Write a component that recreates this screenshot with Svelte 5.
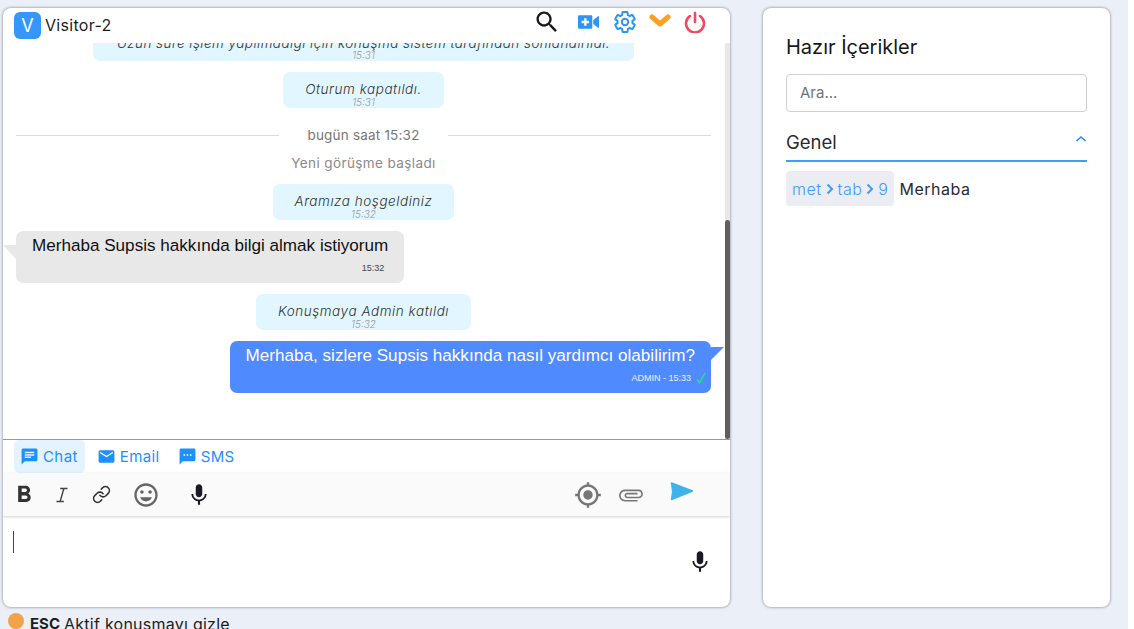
<script lang="ts">
  const tabs = [
    { label: 'Chat', d: 'M20 2H4c-1.1 0-1.99.9-1.99 2L2 22l4-4h14c1.1 0 2-.9 2-2V4c0-1.1-.9-2-2-2zM6 9h12v2H6V9zm8 5H6v-2h8v2zm4-6H6V6h12v2z', active: true },
    { label: 'Email', d: 'M20 4H4c-1.1 0-1.99.9-1.99 2L2 18c0 1.1.9 2 2 2h16c1.1 0 2-.9 2-2V6c0-1.1-.9-2-2-2zm0 4l-8 5-8-5V6l8 5 8-5v2z', active: false },
    { label: 'SMS', d: 'M20 2H4c-1.1 0-1.99.9-1.99 2L2 22l4-4h14c1.1 0 2-.9 2-2V4c0-1.1-.9-2-2-2zM9 11H7V9h2v2zm4 0h-2V9h2v2zm4 0h-2V9h2v2z', active: false }
  ];
  const keys = ['met', 'tab', '9'];
  const mic = 'M12 14c1.66 0 2.99-1.34 2.99-3L15 5c0-1.66-1.34-3-3-3S9 3.34 9 5v6c0 1.66 1.34 3 3 3zm5.3-3c0 3-2.54 5.1-5.3 5.1S6.7 14 6.7 11H5c0 3.41 2.72 6.23 6 6.72V21h2v-3.28c3.28-.48 6-3.3 6-6.72h-1.7z';
</script>

<div class="page">
  <div class="columns">
    <section class="chat card">
      <header class="head">
        <div class="who">
          <span class="avatar">V</span>
          <span class="name">Visitor-2</span>
        </div>
        <div class="actions">
          <svg class="i-search" viewBox="0 0 24 24"><path fill="#1a1a1a" d="M15.5 14h-.79l-.28-.27C15.41 12.59 16 11.11 16 9.5 16 5.91 13.09 3 9.5 3S3 5.91 3 9.5 5.91 16 9.5 16c1.61 0 3.09-.59 4.23-1.57l.27.28v.79l5 4.99L20.49 19l-4.99-5zm-6 0C7.01 14 5 11.99 5 9.5S7.01 5 9.5 5 14 7.01 14 9.5 11.99 14 9.5 14z"/></svg>
          <svg class="i-video" viewBox="0 0 22 14"><path fill="#2f95f5" d="M1 0h13a1 1 0 0 1 1 1v12a1 1 0 0 1-1 1H1a1 1 0 0 1-1-1V1a1 1 0 0 1 1-1zm5.5 3v2.8H3.8v2.4h2.7V11h2.4V8.2h2.7V5.8H8.9V3zM16 5l5-4h1v12h-1l-5-4z" fill-rule="evenodd"/></svg>
          <svg class="i-gear" viewBox="0 0 24 24"><path fill="none" stroke="#2f95f5" stroke-width="2" d="M19.43 12.98c.04-.32.07-.64.07-.98s-.03-.66-.07-.98l2.11-1.65c.19-.15.24-.42.12-.64l-2-3.46c-.12-.22-.39-.3-.61-.22l-2.49 1c-.52-.4-1.08-.73-1.69-.98l-.38-2.65C14.46 2.18 14.25 2 14 2h-4c-.25 0-.46.18-.49.42l-.38 2.65c-.61.25-1.17.59-1.69.98l-2.49-1c-.23-.09-.49 0-.61.22l-2 3.46c-.13.22-.07.49.12.64l2.11 1.65c-.04.32-.07.65-.07.98s.03.66.07.98l-2.11 1.65c-.19.15-.24.42-.12.64l2 3.46c.12.22.39.3.61.22l2.49-1c.52.4 1.08.73 1.69.98l.38 2.65c.03.24.24.42.49.42h4c.25 0 .46-.18.49-.42l.38-2.65c.61-.25 1.17-.59 1.69-.98l2.49 1c.23.09.49 0 .61-.22l2-3.46c.12-.22.07-.49-.12-.64l-2.11-1.65z"/><circle cx="12" cy="12" r="3.2" fill="none" stroke="#2f95f5" stroke-width="2"/></svg>
          <svg class="i-down" viewBox="0 0 22 14"><path fill="none" stroke="#ff9f24" stroke-width="5" stroke-linecap="round" stroke-linejoin="round" d="M3 3l8 7 8-7"/></svg>
          <svg class="i-power" viewBox="0 0 22 22"><path fill="none" stroke="#f4465c" stroke-width="2.6" stroke-linecap="round" d="M6 5a9 9 0 1 0 10 0M11 2v9"/></svg>
        </div>
      </header>

      <div class="body">
        <div class="messages">
          <div class="note wide">
            <em>Uzun süre işlem yapılmadığı için konuşma sistem tarafından sonlandırıldı.</em>
            <time>15:31</time>
          </div>
          <div class="note"><em>Oturum kapatıldı.</em><time>15:31</time></div>
          <div class="day"><span>bugün saat 15:32</span></div>
          <div class="started">Yeni görüşme başladı</div>
          <div class="note"><em>Aramıza hoşgeldiniz</em><time>15:32</time></div>
          <div class="bubble in">
            <p>Merhaba Supsis hakkında bilgi almak istiyorum</p>
            <div class="meta">15:32</div>
          </div>
          <div class="note"><em>Konuşmaya Admin katıldı</em><time>15:32</time></div>
          <div class="bubble out">
            <p>Merhaba, sizlere Supsis hakkında nasıl yardımcı olabilirim?</p>
            <div class="meta">
              ADMIN - 15:33
              <svg class="tick" viewBox="0 0 10 12"><path fill="none" stroke="#1df05a" stroke-width="1.3" d="M1 7l2.5 4L9 1"/></svg>
            </div>
          </div>
        </div>
        <div class="scroll"><div class="thumb"></div></div>
      </div>

      <nav class="tabs">
        {#each tabs as tab}
          <div class="tab" class:active={tab.active}>
            <svg viewBox="0 0 24 24"><path fill="#1e8fff" d={tab.d}/></svg>
            <span>{tab.label}</span>
          </div>
        {/each}
      </nav>

      <div class="toolbar">
        <div class="tools">
          <svg class="t-b" viewBox="0 0 24 24"><path fill="#333" d="M15.6 10.79c.97-.67 1.65-1.77 1.65-2.79 0-2.26-1.75-4-4-4H7v14h7.04c2.09 0 3.71-1.7 3.71-3.79 0-1.52-.86-2.82-2.15-3.42zM10 6.5h3c.83 0 1.5.67 1.5 1.5s-.67 1.5-1.5 1.5h-3v-3zm3.5 9H10v-3h3.5c.83 0 1.5.67 1.5 1.5s-.67 1.5-1.5 1.5z"/></svg>
          <svg class="t-i" viewBox="0 0 24 24"><path fill="#444" d="M10 4v1.6h3l-3.6 12.8H6V20h8v-1.6h-3l3.6-12.8H18V4z"/></svg>
          <svg class="t-l" viewBox="0 0 24 24"><path fill="none" stroke="#333" stroke-width="2" stroke-linecap="round" stroke-linejoin="round" d="M10 13a5 5 0 0 0 7.54.54l3-3a5 5 0 0 0-7.07-7.07l-1.72 1.71M14 11a5 5 0 0 0-7.54-.54l-3 3a5 5 0 0 0 7.07 7.07l1.71-1.71"/></svg>
          <svg class="t-m" viewBox="0 0 24 24"><path fill="#666" d="M11.99 2C6.47 2 2 6.48 2 12s4.47 10 9.99 10C17.52 22 22 17.52 22 12S17.52 2 11.99 2zM12 20c-4.42 0-8-3.58-8-8s3.58-8 8-8 8 3.58 8 8-3.58 8-8 8zm3.5-9c.83 0 1.5-.67 1.5-1.5S16.33 8 15.5 8 14 8.67 14 9.5s.67 1.5 1.5 1.5zm-7 0c.83 0 1.5-.67 1.5-1.5S9.33 8 8.5 8 7 8.67 7 9.5 7.67 11 8.5 11zm3.5 6.5c2.33 0 4.31-1.46 5.11-3.5H6.89c.8 2.04 2.78 3.5 5.11 3.5z"/></svg>
          <svg class="t-v" viewBox="0 0 24 24"><path fill="#1a1a24" d={mic}/></svg>
        </div>
        <div class="tools right">
          <svg class="t-gps" viewBox="0 0 24 24"><path fill="#777" d="M12 8c-2.21 0-4 1.79-4 4s1.79 4 4 4 4-1.79 4-4-1.79-4-4-4zm8.94 3c-.46-4.17-3.77-7.48-7.94-7.94V1h-2v2.06C6.83 3.52 3.52 6.83 3.06 11H1v2h2.06c.46 4.17 3.77 7.48 7.94 7.94V23h2v-2.06c4.17-.46 7.48-3.77 7.94-7.94H23v-2h-2.06zM12 19c-3.87 0-7-3.13-7-7s3.13-7 7-7 7 3.13 7 7-3.13 7-7 7z"/></svg>
          <svg class="t-clip" viewBox="0 0 24 24"><path fill="#777" transform="rotate(90 12 12)" d="M16.5 6v11.5c0 2.21-1.79 4-4 4s-4-1.79-4-4V5c0-1.38 1.12-2.5 2.5-2.5s2.5 1.12 2.5 2.5v10.5c0 .55-.45 1-1 1s-1-.45-1-1V6H10v9.5c0 1.38 1.12 2.5 2.5 2.5s2.5-1.12 2.5-2.5V5c0-2.21-1.79-4-4-4S7 2.79 7 5v12.5c0 3.04 2.46 5.5 5.5 5.5s5.5-2.46 5.5-5.5V6h-1.5z"/></svg>
          <svg class="t-send" viewBox="0 0 24 20"><path fill="#3fb3ea" stroke="#3fb3ea" stroke-width="1.4" stroke-linejoin="round" d="M1.5 1l21 8-21 8.5 1-7h8.5v-1.5H2.5z"/></svg>
        </div>
      </div>

      <div class="compose">
        <span class="caret"></span>
        <svg class="compose-mic" viewBox="0 0 24 24"><path fill="#1a1a24" d={mic}/></svg>
      </div>
    </section>

    <aside class="side card">
      <h2>Hazır İçerikler</h2>
      <div class="search">Ara...</div>
      <div class="group">
        <span>Genel</span>
        <svg viewBox="0 0 12 8"><path fill="none" stroke="#1e8fff" stroke-width="1.6" d="M1.5 6L6 2l4.5 4"/></svg>
      </div>
      <div class="item">
        <span class="keys">
          {#each keys as key, i}
            {#if i > 0}
              <svg viewBox="0 0 8 12"><path fill="none" stroke="#3f9bfb" stroke-width="2" d="M1.5 1.5L6 6l-4.5 4.5"/></svg>
            {/if}
            <span>{key}</span>
          {/each}
        </span>
        <span class="title">Merhaba</span>
      </div>
    </aside>
  </div>

  <footer class="hint">
    <span class="dot"></span>
    <strong>ESC</strong> <span>Aktif konuşmayı gizle</span>
  </footer>
</div>

<style>
  :global(body) {
    background: #fff;
  }

  .page {
    width: 1128px;
    height: 629px;
    overflow: hidden;
    background: #ebeff8;
    padding: 8px 0 0 3px;
    box-sizing: border-box;
    font-family: Inter, sans-serif;
    color: #1d1d24;
  }

  .columns {
    display: flex;
    gap: 33px;
    height: 599px;
  }

  .card {
    background: #fff;
    border-radius: 8px;
    box-shadow: 0 0 3px rgba(0, 0, 0, 0.5);
    box-sizing: border-box;
  }

  .chat {
    width: 727px;
    display: flex;
    flex-direction: column;
    overflow: hidden;
  }

  .head {
    height: 35px;
    flex: none;
    display: flex;
    justify-content: space-between;
    padding: 4px 24px 0 11px;
    box-sizing: border-box;
  }

  .who {
    display: flex;
    align-items: flex-start;
    gap: 4px;
  }

  .avatar {
    width: 27px;
    height: 27px;
    border-radius: 6px;
    background: #3597fb;
    color: #fff;
    font-size: 18px;
    line-height: 27px;
    text-align: center;
  }

  .name {
    font-size: 16px;
    line-height: 27px;
    letter-spacing: 0.3px;
  }

  .actions {
    display: flex;
    align-items: center;
    height: 22px;
    margin-top: -1px;
  }

  .i-search { width: 28px; height: 28px; }
  .i-video { width: 21px; height: 14px; margin-left: 17px; }
  .i-gear { width: 24px; height: 24px; margin-left: 14px; }
  .i-down { width: 22px; height: 14px; margin-left: 12px; margin-top: -2px; }
  .i-power { width: 22px; height: 22px; margin-left: 13px; }

  .body {
    flex: none;
    height: 397px;
    display: flex;
    border-bottom: 1px solid #7b96ee;
    box-sizing: border-box;
  }

  .messages {
    flex: 1;
    min-width: 0;
    overflow: hidden;
    display: flex;
    flex-direction: column;
    justify-content: flex-end;
    align-items: center;
    gap: 11px;
    padding: 0 14px 46px 13px;
    box-sizing: border-box;
  }

  .note {
    flex: none;
    position: relative;
    height: 36px;
    padding: 0 22px;
    border-radius: 7px;
    background: #e2f6ff;
    text-align: center;
    font-size: 13.5px;
    font-weight: 300;
    letter-spacing: 0.55px;
    line-height: 34px;
    color: #333;
    box-sizing: border-box;
  }

  .note em {
    white-space: nowrap;
  }

  .note time {
    position: absolute;
    left: 0;
    right: 0;
    bottom: 0;
    font-size: 10px;
    letter-spacing: 0;
    line-height: 11px;
    font-style: italic;
    color: #9a9a9a;
  }

  .note.wide {
    width: 541px;
    padding: 0;
    line-height: 36px;
    letter-spacing: 0.45px;
  }

  .day {
    flex: none;
    align-self: stretch;
    display: flex;
    align-items: center;
    gap: 28px;
    height: 16px;
    margin-top: 8px;
    font-size: 13.5px;
    letter-spacing: 0.2px;
    color: #777;
  }

  .day::before,
  .day::after {
    content: '';
    flex: 1;
    height: 1px;
    background: #ddd;
  }

  .started {
    flex: none;
    margin: 3px 0;
    height: 13px;
    line-height: 13px;
    font-size: 13.5px;
    letter-spacing: 0.4px;
    color: #8a8a8a;
  }

  .bubble {
    flex: none;
    position: relative;
    height: 52px;
    border-radius: 7px;
    font-family: "Liberation Sans", Arial, sans-serif;
    padding: 6px 16px 0;
    box-sizing: border-box;
  }

  .bubble p {
    margin: 0;
    font-size: 17.1px;
    line-height: 18px;
    white-space: nowrap;
  }

  .bubble .meta {
    display: flex;
    justify-content: flex-end;
    align-items: flex-end;
    gap: 5px;
    font-size: 9px;
    line-height: 12px;
    margin-top: 7px;
  }

  .bubble.in {
    align-self: flex-start;
    background: #e8e8e8;
    color: #111;
  }

  .bubble.in .meta {
    color: #444;
    margin-right: 4px;
  }

  .bubble.in::before {
    content: '';
    position: absolute;
    left: -13px;
    top: 14px;
    border-right: 13px solid #e8e8e8;
    border-bottom: 14px solid transparent;
  }

  .bubble.out {
    align-self: flex-end;
    background: #4f8bff;
    color: #fff;
  }

  .bubble.out .meta {
    color: #e8f0ff;
    margin-right: -11px;
  }

  .tick {
    width: 10px;
    height: 12px;
  }

  .bubble.out::after {
    content: '';
    position: absolute;
    right: -13px;
    top: 6px;
    border-left: 13px solid #4f8bff;
    border-bottom: 13px solid transparent;
  }

  .scroll {
    width: 5px;
    flex: none;
    background: #e8e8e8;
    display: flex;
    flex-direction: column;
    justify-content: flex-end;
  }

  .thumb {
    height: 219px;
    background: #5f5f5f;
    border-radius: 3px;
  }

  .tabs {
    flex: none;
    height: 33px;
    display: flex;
    gap: 6px;
    padding: 0 0 0 11px;
  }

  .tab {
    display: flex;
    align-items: center;
    gap: 4px;
    padding: 0 6px;
    border-radius: 5px;
    color: #1e8fff;
    font-size: 15px;
    letter-spacing: 0.4px;
  }

  .tab svg {
    width: 19px;
    height: 19px;
  }

  .tab.active {
    background: #e4f3ff;
    padding-right: 7px;
  }

  .toolbar {
    flex: none;
    height: 43px;
    display: flex;
    justify-content: space-between;
    align-items: center;
    padding: 0 36px 0 11px;
    background: #fafafa;
    box-shadow: 0 1px 3px rgba(0, 0, 0, 0.18);
    position: relative;
  }

  .tools {
    display: flex;
    align-items: center;
  }

  .t-b { width: 28px; height: 28px; margin-left: -4px; }
  .t-i { width: 22px; height: 22px; margin-left: 13px; }
  .t-l { width: 19px; height: 19px; margin-left: 19px; }
  .t-m { width: 28px; height: 28px; margin-left: 21px; }
  .t-v { width: 26px; height: 26px; margin-left: 26px; }

  .t-gps { width: 28px; height: 28px; }
  .t-clip { width: 26px; height: 26px; margin-left: 16px; }
  .t-send { width: 24px; height: 20px; margin-left: 26px; margin-top: -6px; }

  .compose {
    flex: 1;
    display: flex;
    justify-content: space-between;
    align-items: flex-start;
    padding: 15px 17px 0 10px;
  }

  .caret {
    width: 1px;
    height: 22px;
    background: #444;
  }

  .compose-mic {
    width: 26px;
    height: 26px;
    margin-top: 18px;
  }

  .side {
    width: 347px;
    padding: 26px 23px 0;
  }

  .side h2 {
    margin: 0;
    font-size: 20px;
    line-height: 27px;
    font-weight: 400;
    color: #16161c;
  }

  .search {
    margin-top: 13px;
    height: 38px;
    border: 1px solid #ccd0d6;
    border-radius: 4px;
    padding: 0 13px;
    box-sizing: border-box;
    line-height: 36px;
    font-size: 15px;
    color: #6c757d;
  }

  .group {
    margin-top: 11px;
    height: 39px;
    border-bottom: 2px solid #3ba0fb;
    box-sizing: border-box;
    display: flex;
    justify-content: space-between;
    align-items: center;
    font-size: 18.5px;
    color: #2a2a32;
  }

  .group svg {
    width: 12px;
    height: 8px;
    margin-top: -6px;
  }

  .item {
    margin-top: 9px;
    display: flex;
    align-items: center;
    gap: 6px;
    font-size: 16px;
    letter-spacing: 0.5px;
  }

  .keys {
    display: flex;
    align-items: center;
    gap: 4px;
    background: #ebedf3;
    border-radius: 4px;
    height: 35px;
    padding: 0 6px;
    color: #3f9bfb;
    font-weight: 300;
  }

  .keys svg {
    width: 8px;
    height: 12px;
  }

  .title {
    color: #2a2a32;
    margin-left: -1px;
  }

  .hint {
    display: flex;
    align-items: center;
    gap: 4px;
    padding: 7px 0 0 5px;
    font-size: 16px;
    letter-spacing: 0.25px;
    line-height: 20px;
  }

  .hint strong {
    margin-left: 2px;
    font-size: 15px;
    letter-spacing: 0;
  }

  .dot {
    width: 16px;
    height: 16px;
    border-radius: 50%;
    background: #f2a34a;
    margin-top: -6px;
  }
</style>
